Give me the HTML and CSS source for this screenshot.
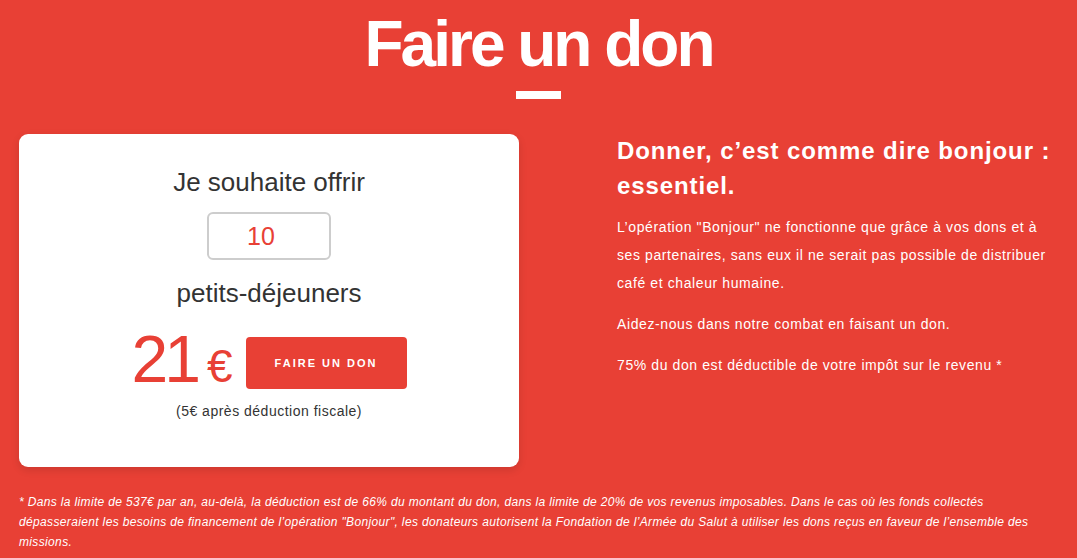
FILE: index.html
```html
<!DOCTYPE html>
<html lang="fr">
<head>
    <meta charset="UTF-8">
    <meta name="viewport" content="width=device-width, initial-scale=1.0">
    <title>Faire un don</title>
    <link rel="stylesheet" href="styles.css">
</head>
<body>
    <main class="page">
        <h1 class="title">Faire un don</h1>
        <div class="title-bar"></div>

        <!-- Donation block -->
        <section class="donate">
            <div class="card">
                <p class="card-label">Je souhaite offrir</p>
                <input class="qty" type="text" value="10">
                <p class="card-label card-label-sub">petits-déjeuners</p>
                <div class="price-row">
                    <span class="amount">21<span class="currency">€</span></span>
                    <button class="donate-btn">Faire un don</button>
                </div>
                <p class="after-tax">(5€ après déduction fiscale)</p>
            </div>

            <div class="info">
                <h2>Donner, c’est comme dire bonjour : essentiel.</h2>
                <p>L’opération "Bonjour" ne fonctionne que grâce à vos dons et à ses partenaires, sans eux il ne serait pas possible de distribuer café et chaleur humaine.</p>
                <p>Aidez-nous dans notre combat en faisant un don.</p>
                <p>75% du don est déductible de votre impôt sur le revenu *</p>
            </div>
        </section>

        <p class="footnote">* Dans la limite de 537€ par an, au-delà, la déduction est de 66% du montant du don, dans la limite de 20% de vos revenus imposables. Dans le cas où les fonds collectés dépasseraient les besoins de financement de l’opération "Bonjour", les donateurs autorisent la Fondation de l’Armée du Salut à utiliser les dons reçus en faveur de l’ensemble des missions.</p>
    </main>
</body>
</html>
```

FILE: styles.css
```css
body {
    margin: 0;
    background-color: #e84035;
    font-family: "Liberation Sans", Arial, sans-serif;
    color: #fff;
}
.page {
    padding: 6px 19px 0;
}

/* Title */
.title {
    margin: 0;
    font-size: 64px;
    line-height: 76px;
    font-weight: bold;
    letter-spacing: -3px;
    text-align: center;
}
.title-bar {
    width: 45px;
    height: 8px;
    margin: 9px auto 0;
    background-color: #fff;
}

/* Donation block */
.donate {
    display: flex;
    gap: 98px;
    margin-top: 35px;
}
.card {
    width: 500px;
    height: 333px;
    box-sizing: border-box;
    padding-top: 33px;
    display: flex;
    flex-direction: column;
    align-items: center;
    background-color: #fff;
    border-radius: 9px;
    box-shadow: 0 3px 8px rgba(0, 0, 0, 0.12);
    color: #333;
}
.card-label {
    margin: 0;
    font-size: 26px;
    line-height: 30px;
}
.card-label-sub {
    margin-top: 18px;
}
.qty {
    width: 124px;
    height: 48px;
    box-sizing: border-box;
    margin-top: 15px;
    padding: 0 16px 0 0;
    border: 2px solid #cdcdcd;
    border-radius: 6px;
    font-family: inherit;
    font-size: 25px;
    color: #e84035;
    text-align: center;
    outline: none;
}
.price-row {
    display: flex;
    align-items: center;
    margin-top: 18px;
}
.amount {
    font-size: 66px;
    line-height: 66px;
    color: #e84035;
    letter-spacing: -4px;
}
.currency {
    font-size: 46px;
    margin-left: 10px;
    letter-spacing: 0;
}
.donate-btn {
    width: 161px;
    height: 52px;
    margin-left: 13px;
    background-color: #e84035;
    color: #fff;
    border: none;
    border-radius: 4px;
    font-family: inherit;
    font-size: 11px;
    font-weight: bold;
    letter-spacing: 2px;
    text-transform: uppercase;
    cursor: pointer;
}
.after-tax {
    margin: 2px 0 0;
    font-size: 14px;
    line-height: 20px;
    letter-spacing: 0.5px;
}

/* Right column */
.info {
    flex: 1;
    margin-top: -1px;
}
.info h2 {
    margin: 0 0 10px;
    font-size: 24px;
    line-height: 35px;
    letter-spacing: 0.9px;
}
.info p {
    margin: 0 0 13px;
    font-size: 14px;
    line-height: 28px;
    letter-spacing: 0.6px;
}

/* Footnote */
.footnote {
    margin: 25px 0 0;
    font-size: 12px;
    line-height: 20px;
    font-style: italic;
    letter-spacing: 0.35px;
}
```
